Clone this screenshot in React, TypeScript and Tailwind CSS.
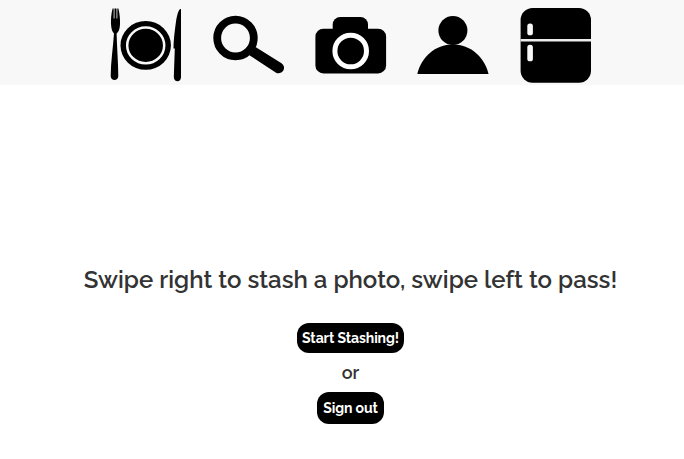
import type { ReactNode } from "react";

function NavIcon({ label, children }: { label: string; children: ReactNode }) {
  return (
    <a aria-label={label} className="block h-[85px] w-[72px]">
      <svg viewBox="0 0 72 85" className="h-[85px] w-[72px] overflow-visible fill-black">
        {children}
      </svg>
    </a>
  );
}

function NavBar() {
  return (
    <nav className="flex h-[85px] gap-[30.5px] bg-[#f8f8f8] pl-[110px]">
      <NavIcon label="Meals">
        <path d="M2.600 8.500C1.200 14 .8 19 1 24c.2 5 1.300 7.500 3 9.500C3 48 .8 62 .7 76c0 5.300 7.600 5.300 7.600 0C8.200 62 7 48 6.600 33.500c2.200-2 3.200-4.500 3.400-9.500.2-5-.3-10-1.600-15.500Z" />
        <path d="M4.100 8v10.500M6.900 8v10.500" fill="none" stroke="#f8f8f8" strokeWidth=".8" />
        <ellipse cx="35.700" cy="45.400" rx="25.200" ry="24.400" />
        <ellipse cx="35.700" cy="45.400" rx="18.500" ry="17.800" fill="none" stroke="#f8f8f8" strokeWidth="2.500" />
        <path d="M71 9c-2.400-.5-4 6-5.200 14-1.200 8.500-2.200 17-2.300 25.500h1.300L63.800 77c0 5.600 7.400 5.600 7.200 0Z" />
      </NavIcon>
      <NavIcon label="Search">
        <circle cx="22.500" cy="38" r="18.300" fill="none" stroke="black" strokeWidth="7.800" />
        <path d="M42.500 47 68.500 63.200a5.200 5.200 0 0 1-5.800 9.200L36 55Z" />
      </NavIcon>
      <NavIcon label="Camera">
        <rect x=".4" y="28.700" width="70.700" height="44.700" rx="8" />
        <rect x="17.700" y="17" width="35.300" height="30" rx="7.500" />
        <circle cx="35.700" cy="51" r="15.800" fill="none" stroke="white" strokeWidth="5" />
      </NavIcon>
      <NavIcon label="Profile">
        <circle cx="34.900" cy="30.400" r="14.500" />
        <path d="M-.7 74C3.300 57 17 44.500 34.900 44.500S66.500 57 70.500 74Z" />
      </NavIcon>
      <NavIcon label="Fridge">
        <rect x=".6" y="8" width="70.400" height="74.700" rx="12" />
        <path d="M.6 40.200h70.400" stroke="#ececec" strokeWidth="2.400" />
        <rect x="7.300" y="23.500" width="5.600" height="11.800" rx="2.600" fill="#f8f8f8" />
        <rect x="7.300" y="44.800" width="5.600" height="16.500" rx="2.600" fill="#f8f8f8" />
      </NavIcon>
    </nav>
  );
}

export default function App() {
  return (
    <div className="h-[459px] w-[684px] overflow-hidden bg-white font-['Raleway','Lato',sans-serif] text-[#333]">
      <NavBar />
      <main className="flex flex-col items-center pt-[179px] pl-[17px]">
        <h1 className="text-[24px] leading-[32px] font-[560] tracking-[0.04px] whitespace-nowrap">
          Swipe right to stash a photo, swipe left to pass!
        </h1>
        <button className="mt-[27px] h-[30px] w-[107px] rounded-[12px] bg-black text-[14px] font-bold tracking-[-0.1px] whitespace-nowrap text-white">
          Start Stashing!
        </button>
        <p className="mt-[7px] text-[18px] leading-[25px] font-[560]">or</p>
        <button className="mt-[7px] h-[32px] w-[67px] rounded-[12px] bg-black text-[14px] font-bold tracking-[-0.1px] whitespace-nowrap text-white">
          Sign out
        </button>
      </main>
    </div>
  );
}
